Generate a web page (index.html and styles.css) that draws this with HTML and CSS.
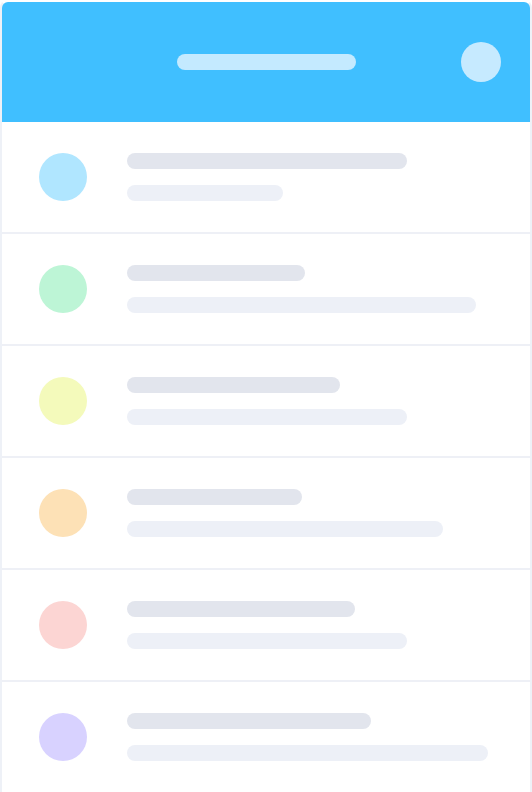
FILE: index.html
```html
<!DOCTYPE html>
<html>
<head>
<meta charset="utf-8">
<link rel="stylesheet" href="styles.css">
</head>
<body>
<div class="card">
  <div class="header">
    <div class="title-bar"></div>
    <div class="avatar"></div>
  </div>
  <div class="row">
    <div class="dot c1"></div>
    <div class="lines"><div class="l1" style="width:280px"></div><div class="l2" style="width:156px"></div></div>
  </div>
  <div class="row">
    <div class="dot c2"></div>
    <div class="lines"><div class="l1" style="width:178px"></div><div class="l2" style="width:349px"></div></div>
  </div>
  <div class="row">
    <div class="dot c3"></div>
    <div class="lines"><div class="l1" style="width:213px"></div><div class="l2" style="width:280px"></div></div>
  </div>
  <div class="row">
    <div class="dot c4"></div>
    <div class="lines"><div class="l1" style="width:175px"></div><div class="l2" style="width:316px"></div></div>
  </div>
  <div class="row">
    <div class="dot c5"></div>
    <div class="lines"><div class="l1" style="width:228px"></div><div class="l2" style="width:280px"></div></div>
  </div>
  <div class="row">
    <div class="dot c6"></div>
    <div class="lines"><div class="l1" style="width:244px"></div><div class="l2" style="width:361px"></div></div>
  </div>
</div>
</body>
</html>
```
FILE: styles.css
```css
html, body {
  margin: 0;
  padding: 0;
  background: #ffffff;
  overflow: hidden;
  height: 792px;
}
.card {
  width: 528px;
  border: 2px solid #eef1f7;
  border-top-color: transparent;
  border-radius: 8px 8px 0 0;
  background: #ffffff;
}
.header {
  height: 120px;
  background: #40bfff;
  border-radius: 6px 6px 0 0;
  display: grid;
  grid-template-columns: 1fr 179px 1fr;
  align-items: center;
}
.title-bar {
  grid-column: 2;
  height: 16px;
  border-radius: 8px;
  background: #c4eaff;
}
.avatar {
  grid-column: 3;
  justify-self: end;
  margin-right: 29px;
  width: 40px;
  height: 40px;
  border-radius: 50%;
  background: #c6eaff;
}
.row {
  height: 110px;
  display: flex;
  align-items: center;
  padding-left: 37px;
  gap: 40px;
  border-bottom: 2px solid #eef0f6;
}
.dot {
  width: 48px;
  height: 48px;
  border-radius: 50%;
  flex: none;
}
.c1 { background: #b0e6ff; }
.c2 { background: #bdf5d6; }
.c3 { background: #f4fabb; }
.c4 { background: #fde1b6; }
.c5 { background: #fcd5d3; }
.c6 { background: #d8d2ff; }
.lines {
  display: flex;
  flex-direction: column;
  gap: 16px;
}
.l1, .l2 {
  height: 16px;
  border-radius: 8px;
}
.l1 { background: #e2e5ed; }
.l2 { background: #edf0f7; }
```
